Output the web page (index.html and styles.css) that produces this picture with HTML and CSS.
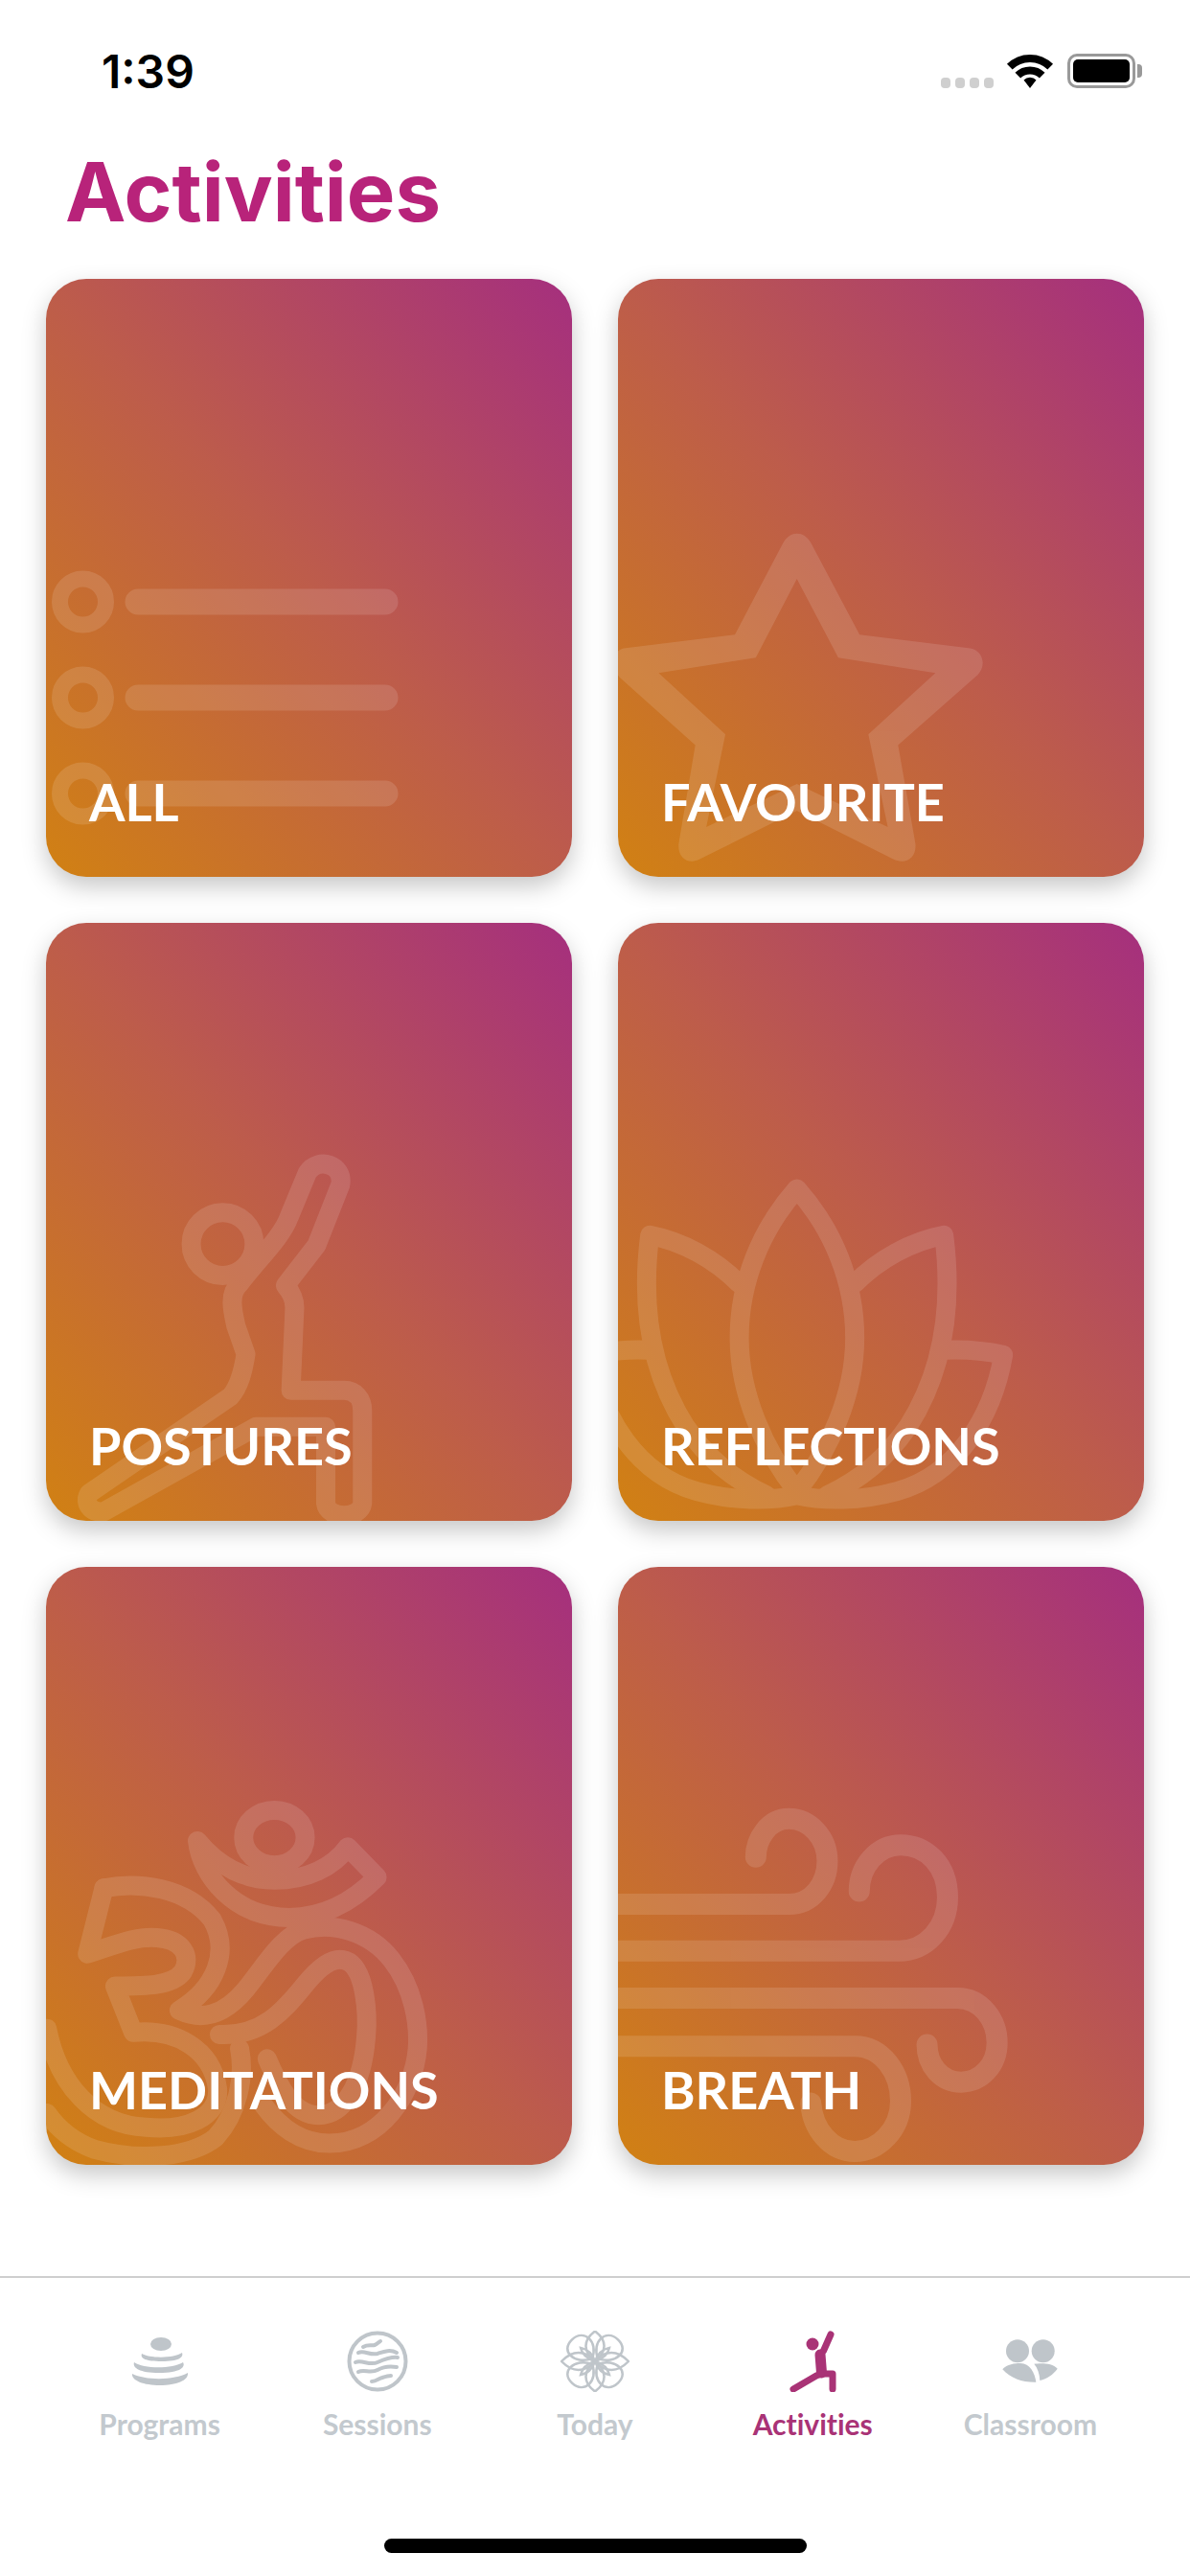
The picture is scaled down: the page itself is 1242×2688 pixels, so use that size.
FILE: index.html
```html
<!DOCTYPE html>
<html lang="en">
<head>
<meta charset="utf-8">
<title>Activities</title>
<link rel="stylesheet" href="styles.css">
</head>
<body>
<div class="screen">
  <header class="status">
    <span class="time">1:39</span>
    <div class="status-right">
      <div class="signal"><i></i><i></i><i></i><i></i></div>
      <svg class="wifi" viewBox="0 0 52 36" width="52" height="36">
        <path class="wifi-arc" d="M4.800 13.700A30 30 0 0 1 47.200 13.700"/>
        <path class="wifi-arc" d="M13.300 22.700A18 18 0 0 1 38.700 22.700"/>
        <path class="wifi-fill" d="M26 36L19.500 27.500A9 9 0 0 1 32.500 27.500Z"/>
      </svg>
      <div class="battery"><div class="battery-level"></div></div>
      <div class="battery-cap"></div>
    </div>
  </header>

  <h1 class="title">Activities</h1>

  <main class="grid">
    <a class="card">
      <svg class="art" viewBox="0 0 549 624">
        <circle class="w17" cx="38.500" cy="337" r="24"/><circle class="w17" cx="38.500" cy="437" r="24"/><circle class="w17" cx="38.500" cy="537" r="24"/>
        <path class="w27" d="M96 337H354M96 437H354M96 537H354"/>
      </svg>
      <span class="label">ALL</span>
    </a>
    <a class="card">
      <svg class="art" viewBox="0 0 549 624">
        <path class="star" transform="translate(-15 -11) scale(.3827 .4209)" d="M490 680C510 650 545 650 565 680L698 908L1000 942C1035 948 1045 985 1020 1008L803 1182L850 1425C855 1460 825 1480 790 1465L527 1345L262 1465C230 1480 200 1460 205 1425L250 1182L45 1015C20 990 20 950 55 942L358 908ZM527 770L415 965L150 1003L332 1155L280 1385L527 1278L775 1385L722 1155L905 1003L640 965Z"/>
      </svg>
      <span class="label">FAVOURITE</span>
    </a>
    <a class="card">
      <svg class="art" viewBox="0 0 549 624">
        <g transform="translate(-18 -13) scale(.3827 .4209)">
          <ellipse cx="529" cy="827" rx="86" ry="78"/>
          <path d="M575 925C545 950 555 990 565 1030L592 1100C585 1140 575 1180 550 1205L165 1445C150 1465 165 1495 205 1490L620 1280H810V1470C815 1510 905 1510 910 1470V1240C910 1210 890 1190 860 1190H715L725 985C725 960 715 945 700 930L785 830L850 680C860 630 790 610 760 650L710 760C690 810 630 860 575 925Z"/>
        </g>
      </svg>
      <span class="label">POSTURES</span>
    </a>
    <a class="card">
      <svg class="art" viewBox="0 0 549 624">
        <g transform="translate(-15 -13) scale(.3827 .4209)">
          <path d="M527 690C430 790 370 920 370 1060C370 1200 440 1340 527 1440C615 1340 685 1200 685 1060C685 920 625 790 527 690Z"/>
          <path d="M685 925C750 865 840 820 928 805C950 960 935 1130 830 1280C770 1360 700 1410 610 1450"/>
          <path d="M369 925C304 865 214 820 126 805C104 960 119 1130 224 1280C284 1360 354 1410 444 1450"/>
          <path d="M930 1090C980 1088 1040 1092 1090 1102C1060 1260 960 1400 800 1440C700 1465 600 1465 527 1450C454 1465 354 1465 254 1440C94 1400 -6 1260 -36 1102C14 1092 74 1088 124 1090"/>
        </g>
      </svg>
      <span class="label">REFLECTIONS</span>
    </a>
    <a class="card">
      <svg class="art" viewBox="0 0 549 624">
        <g transform="translate(-18 -15) scale(.3827 .4209)">
          <ellipse cx="670" cy="707" rx="84" ry="68"/>
          <path d="M460 715C470 800 560 905 710 905C810 905 890 860 950 805L870 730C830 780 760 812 670 812C580 812 510 770 460 715Z"/>
          <path d="M205 832C300 815 430 830 500 910C550 990 510 1080 410 1135C470 1160 530 1150 590 1085C640 1030 690 950 750 935C830 915 930 940 990 1010C1050 1080 1065 1170 1060 1230C1050 1340 960 1465 820 1465C740 1465 680 1420 640 1370"/>
          <path d="M205 832L160 995C230 975 290 950 350 955C420 960 445 1000 420 1040C390 1075 320 1075 235 1075L285 1190C400 1180 500 1230 515 1330C520 1400 430 1435 320 1425C180 1420 80 1320 50 1180"/>
          <path d="M520 1195C640 1200 700 1130 750 1075C790 1030 830 1000 865 1012C920 1030 925 1150 920 1200C910 1320 860 1395 790 1395C720 1395 680 1320 650 1255"/>
          <path d="M575 1230C590 1300 570 1390 510 1450C440 1500 300 1510 180 1480C120 1460 80 1430 50 1390"/>
        </g>
      </svg>
      <span class="label">MEDITATIONS</span>
    </a>
    <a class="card">
      <svg class="art" viewBox="0 0 549 624">
        <g class="w22" transform="translate(-15 -15) scale(.3827 .4209)">
          <path d="M0 872H505C570 872 610 820 610 765C610 705 560 660 505 660C450 660 415 710 415 755"/>
          <path d="M0 988H805C880 988 938 930 938 855C938 775 880 725 810 725C745 725 697 780 697 840"/>
          <path d="M0 1105H965C1030 1105 1073 1160 1073 1215C1073 1270 1030 1313 975 1313C920 1313 882 1270 882 1220"/>
          <path d="M0 1224H685C760 1224 810 1290 810 1360C810 1430 750 1485 685 1485C620 1485 570 1430 565 1365"/>
        </g>
      </svg>
      <span class="label">BREATH</span>
    </a>
  </main>

  <footer class="tabbar">
    <nav class="tabs">
      <a class="tab">
        <svg class="tab-icon" viewBox="0 0 64 64" width="64" height="64">
          <g class="solid" transform="translate(3 7)">
            <ellipse cx="30" cy="7" rx="11" ry="7"/>
            <path d="M10 17C18 22 44 22 52 16C54 21 48 25 31 25C14 25 8 22 10 17Z"/>
            <path d="M2 26C12 33 42 33 53 26C56 31 50 37 28 37C8 37 0 32 2 26Z"/>
            <path d="M0 38C14 45 44 45 58 37C59 45 46 50 29 50C12 50 -1 45 0 38Z"/>
          </g>
        </svg>
        <span>Programs</span>
      </a>
      <a class="tab">
        <svg class="tab-icon" viewBox="0 0 64 64" width="64" height="64">
          <g class="line">
            <circle cx="32" cy="32" r="29.500"/>
            <path d="M17 17C22 14 26 16 29 15C32 14 33 12 35 11"/>
            <path d="M12 23C18 20 24 26 32 24C38 22 45 19 52 23"/>
            <path d="M9 33C16 30 24 37 32 33C39 30 46 27 53 28"/>
            <path d="M12 43C18 40 25 45 32 41C39 37 46 37 52 38"/>
            <path d="M26 53C31 53 33 50 37 49C40 48 43 47 46 47"/>
          </g>
        </svg>
        <span>Sessions</span>
      </a>
      <a class="tab">
        <svg class="tab-icon" viewBox="-36 -32 72 64" width="72" height="64">
          <g class="line thin" transform="scale(1.060 1)">
            <path d="M0 0C-12 -10 -12 -22 0 -31.500C12 -22 12 -10 0 0Z"/>
            <path transform="rotate(90)" d="M0 0C-12 -10 -12 -22 0 -33C12 -22 12 -10 0 0Z"/>
            <path transform="rotate(180)" d="M0 0C-12 -10 -12 -22 0 -31.500C12 -22 12 -10 0 0Z"/>
            <path transform="rotate(270)" d="M0 0C-12 -10 -12 -22 0 -33C12 -22 12 -10 0 0Z"/>
            <path transform="rotate(45)" d="M0 -4C-17 -12 -17 -32 0 -32C17 -32 17 -12 0 -4Z"/>
            <path transform="rotate(135)" d="M0 -4C-17 -12 -17 -32 0 -32C17 -32 17 -12 0 -4Z"/>
            <path transform="rotate(225)" d="M0 -4C-17 -12 -17 -32 0 -32C17 -32 17 -12 0 -4Z"/>
            <path transform="rotate(315)" d="M0 -4C-17 -12 -17 -32 0 -32C17 -32 17 -12 0 -4Z"/>
            <path transform="rotate(45)" d="M0 0C-4 -8 -4 -14 0 -20C4 -14 4 -8 0 0Z"/>
            <path transform="rotate(135)" d="M0 0C-4 -8 -4 -14 0 -20C4 -14 4 -8 0 0Z"/>
            <path transform="rotate(225)" d="M0 0C-4 -8 -4 -14 0 -20C4 -14 4 -8 0 0Z"/>
            <path transform="rotate(315)" d="M0 0C-4 -8 -4 -14 0 -20C4 -14 4 -8 0 0Z"/>
          </g>
        </svg>
        <span>Today</span>
      </a>
      <a class="tab active">
        <svg class="tab-icon" viewBox="0 0 64 64" width="64" height="64">
          <circle class="figure-head" cx="32" cy="14" r="6.500"/>
          <g class="figure">
            <path class="arm" d="M51 4L43.500 21L40 25"/>
            <path class="torso" d="M40 25L41.500 44"/>
            <path class="arm" d="M41.500 45H53V61"/>
            <path class="arm" d="M41 45L36 47L12 61"/>
          </g>
        </svg>
        <span>Activities</span>
      </a>
      <a class="tab">
        <svg class="tab-icon" viewBox="0 0 64 64" width="64" height="64">
          <g class="solid">
            <circle cx="19" cy="21.300" r="12"/>
            <circle cx="45.700" cy="21.300" r="12"/>
            <path d="M3.300 40.300C8 35 16 34 22 34C32 34 37 44 38.300 53.700C24 54 12 50 3.300 40.300Z"/>
            <path d="M36.300 34.700C42 34 55 33 60.700 39.700C56 46 50 50 42.300 52C42 45 40 39 36.300 34.700Z"/>
          </g>
        </svg>
        <span>Classroom</span>
      </a>
    </nav>
    <div class="home-indicator"></div>
  </footer>
</div>
</body>
</html>
```

FILE: styles.css
```css
* { box-sizing: border-box; }
html, body { margin: 0; padding: 0; background: #fff; }
.screen {
  width: 1242px;
  height: 2688px;
  display: flex;
  flex-direction: column;
  overflow: hidden;
}
.status {
  height: 151px;
  padding: 48px 50px 0 106px;
  display: flex;
  justify-content: space-between;
  align-items: flex-start;
}
.time {
  font: 600 48px/54px Inter, "Liberation Sans", sans-serif;
  color: #000;
}
.status-right {
  display: flex;
  align-items: flex-start;
  padding-top: 8px;
}
.signal {
  display: flex;
  gap: 5px;
  margin: 25px 12px 0 0;
}
.signal i {
  width: 10px;
  height: 11px;
  border-radius: 4px;
  background: #cfcfcf;
}
.wifi { margin-right: 13px; }
.wifi-arc { fill: none; stroke: #000; stroke-width: 8; }
.wifi-fill { fill: #000; }
.battery {
  width: 71px;
  height: 36px;
  border: 3px solid #999;
  border-radius: 10px;
  padding: 3px;
  background: #fff;
}
.battery-level {
  width: 100%;
  height: 100%;
  background: #000;
  border-radius: 5px;
}
.battery-cap {
  width: 5px;
  height: 14px;
  margin: 11px 0 0 2px;
  background: #999;
  border-radius: 0 4px 4px 0;
}
.title {
  margin: 0;
  height: 140px;
  padding-left: 68px;
  font: 700 85px/100px Inter, "Liberation Sans", sans-serif;
  color: #b8237a;
}
.grid {
  display: grid;
  grid-template-columns: 549px 549px;
  grid-auto-rows: 624px;
  gap: 48px;
  padding: 0 48px;
}
.card {
  position: relative;
  display: flex;
  align-items: flex-end;
  padding: 0 45px 51px;
  border-radius: 42px;
  overflow: hidden;
  background: linear-gradient(to top right, #d18113 0%, #bd5c4b 50%, #a52f7e 100%);
  filter: drop-shadow(0 10px 12px rgba(0, 0, 0, .22));
}
.art {
  position: absolute;
  inset: 0;
  width: 549px;
  height: 624px;
  opacity: .12;
  fill: none;
  stroke: #fff;
  stroke-width: 20;
  stroke-linejoin: round;
  stroke-linecap: round;
}
.art * { vector-effect: non-scaling-stroke; }
.art .w17 { stroke-width: 17; }
.art .w22 { stroke-width: 22; }
.art .w27 { stroke-width: 27; }
.art .star { fill: #fff; stroke: none; }
.label {
  position: relative;
  font: 700 54px/54px Lato, sans-serif;
  color: #fff;
}
.tabbar {
  margin-top: auto;
  height: 313px;
  border-top: 2px solid #cfcfcf;
  padding: 55px 53px 0;
  display: flex;
  flex-direction: column;
}
.tabs {
  display: grid;
  grid-template-columns: repeat(5, 1fr);
}
.tab {
  display: flex;
  flex-direction: column;
  align-items: center;
  font: 700 30px/36px Lato, sans-serif;
  font-variant-ligatures: none;
  color: #c3c9ce;
}
.tab-icon { margin-bottom: 15px; }
.tab.active { color: #a93376; }
.solid { fill: #bfc5ca; }
.line { fill: none; stroke: #bfc5ca; stroke-width: 4; stroke-linecap: round; }
.line.thin { stroke-width: 2.400; }
.figure-head { fill: #a93376; }
.figure { fill: none; stroke: #a93376; stroke-linecap: round; stroke-linejoin: round; }
.arm { stroke-width: 7; }
.torso { stroke-width: 11; }
.home-indicator {
  width: 441px;
  height: 15px;
  margin: 102px auto 0;
  background: #000;
  border-radius: 8px;
}
```
